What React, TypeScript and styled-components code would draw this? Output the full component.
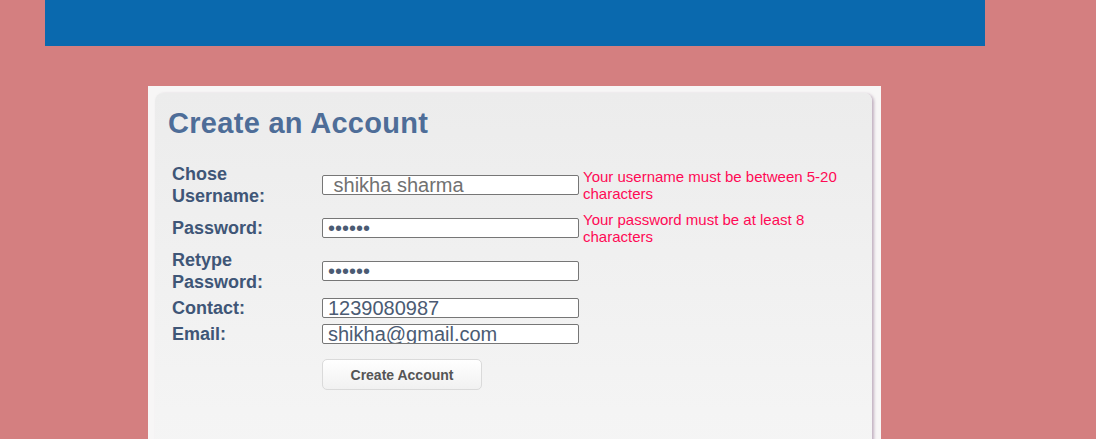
import styled, { createGlobalStyle } from "styled-components";

const GlobalStyle = createGlobalStyle`
  html, body {
    margin: 0;
    padding: 0;
    background: #d47f80;
    overflow: hidden;
  }
  body {
    font-family: "Liberation Sans", Arial, sans-serif;
  }
`;

const Page = styled.div`
  width: 940px;
  margin-left: 45px;
`;

const Header = styled.header`
  height: 46px;
  background: #0a69ae;
`;

const Outer = styled.div`
  width: 717px;
  margin: 40px 0 0 103px;
  padding: 7px 9px 0 7px;
  background: #f7f6f6;
`;

const Panel = styled.section`
  height: 360px;
  padding: 14px 16px 0 16px;
  border-radius: 8px 8px 0 0;
  background: linear-gradient(#ececec 0%, #f4f4f4 85%, #f5f5f5 100%);
  box-shadow: 2px 1px 3px rgba(150, 120, 150, 0.55);
`;

const Title = styled.h1`
  margin: 0 0 22px -3px;
  font-size: 29px;
  line-height: 33px;
  font-weight: bold;
  letter-spacing: 0.3px;
  color: #4e6d98;
`;

const Form = styled.form`
  display: grid;
  grid-template-columns: 148px 259px 1fr;
  column-gap: 2px;
  row-gap: 2px;
  align-items: center;
`;

const Label = styled.label`
  padding: 1px;
  font-size: 18px;
  line-height: 22px;
  font-weight: bold;
  color: #3f5677;
`;

const Cell = styled.div`
  padding: 1px;
  display: flex;
  align-items: center;
`;

const Input = styled.input<{ $muted?: boolean }>`
  box-sizing: border-box;
  width: 257px;
  height: 20px;
  margin: 0;
  padding: 0 5px;
  border: 1px solid #767676;
  border-radius: 2px;
  background: #fff;
  font-family: "Liberation Sans", Arial, sans-serif;
  font-size: 20px;
  color: ${(p) => (p.$muted ? "#717171" : "#4b5b73")};
  outline: none;
`;

const Error = styled.div`
  padding: 1px;
  font-size: 15px;
  line-height: 17px;
  color: #ff0a55;
`;

const Button = styled.button`
  margin-top: 10px;
  width: 160px;
  height: 31px;
  border: 1px solid #dadada;
  border-radius: 5px;
  background: linear-gradient(#ffffff, #f1f1f1);
  font-family: "Liberation Sans", Arial, sans-serif;
  font-size: 14px;
  font-weight: bold;
  color: #555;
  cursor: pointer;
`;

const fields = [
  { label: "Chose Username:", type: "text", value: " shikha sharma", muted: true, error: "Your username must be between 5-20 characters" },
  { label: "Password:", type: "password", value: "123456", error: "Your password must be at least 8 characters" },
  { label: "Retype Password:", type: "password", value: "123456" },
  { label: "Contact:", type: "text", value: "1239080987" },
  { label: "Email:", type: "text", value: "shikha@gmail.com" },
];

const App = () => {
  return (
    <>
      <GlobalStyle />
      <Page>
        <Header />
        <Outer>
          <Panel>
            <Title>Create an Account</Title>
            <Form onSubmit={(e) => e.preventDefault()}>
              {fields.map((f) => (
                <>
                  <Label key={f.label + "l"}>{f.label}</Label>
                  <Cell key={f.label + "i"}>
                    <Input type={f.type} defaultValue={f.value} $muted={f.muted} />
                  </Cell>
                  <Error key={f.label + "e"}>{f.error}</Error>
                </>
              ))}
              <span />
              <Cell>
                <Button type="submit">Create Account</Button>
              </Cell>
            </Form>
          </Panel>
        </Outer>
      </Page>
    </>
  );
};

export default App;
